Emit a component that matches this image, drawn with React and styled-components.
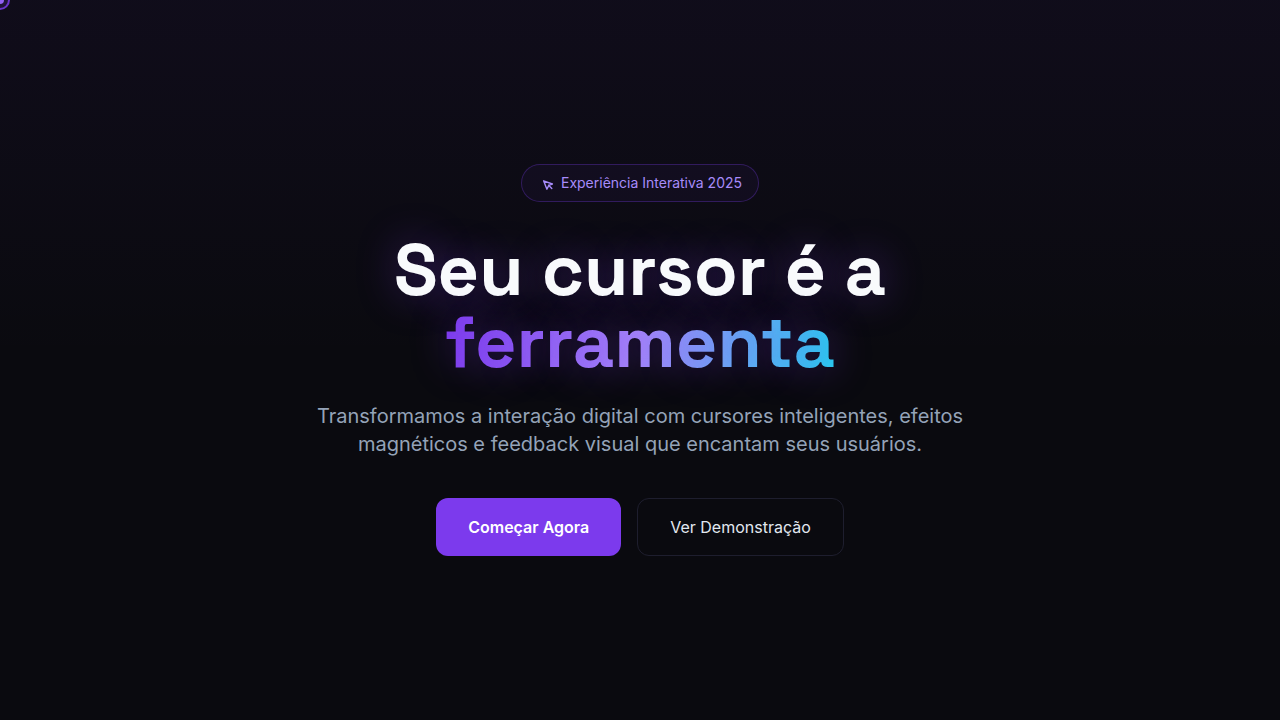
import React from "react";
import styled, { createGlobalStyle } from "styled-components";

const GlobalStyle = createGlobalStyle`
  * {
    box-sizing: border-box;
  }

  body {
    margin: 0;
    background: #0a0a0f;
    color: #f8fafc;
    font-family: Inter, "Liberation Sans", sans-serif;
    overflow-x: hidden;
  }
`;

const Hero = styled.main`
  display: flex;
  flex-direction: column;
  justify-content: center;
  align-items: center;
  min-height: 100vh;
  padding: 32px 24px;
  text-align: center;
  background: linear-gradient(180deg, rgba(124, 58, 237, 0.05) 0%, transparent 50%);
`;

const Badge = styled.div`
  display: flex;
  align-items: center;
  gap: 8px;
  margin-bottom: 32px;
  padding: 8px 16px;
  border: 1px solid rgba(124, 58, 237, 0.3);
  border-radius: 20px;
  background: rgba(124, 58, 237, 0.05);
  color: #a78bfa;
  font-size: 14px;
  line-height: 20px;

  svg {
    width: 15px;
    height: 15px;
    overflow: visible;
  }
`;

const Title = styled.h1`
  margin: 0 0 24px;
  font-family: "Space Grotesk", Inter, sans-serif;
  font-size: 72px;
  font-weight: 700;
  line-height: 72px;
  text-shadow: 0 0 40px rgba(124, 58, 237, 0.4);
`;

const Highlight = styled.span`
  background: linear-gradient(100deg, #7c3aed 0%, #a78bfa 50%, #22d3ee 100%);
  background-clip: text;
  -webkit-background-clip: text;
  color: transparent;
`;

const Lead = styled.p`
  max-width: 672px;
  margin: 0 0 40px;
  color: #94a3b8;
  font-size: 20px;
  line-height: 28px;
`;

const Actions = styled.div`
  display: flex;
  flex-wrap: wrap;
  justify-content: center;
  gap: 16px;
`;

const Button = styled.button`
  padding: 16px 32px;
  border: ${(props) => (props.$primary ? "none" : "1px solid #1e1e2e")};
  border-radius: 12px;
  background: ${(props) => (props.$primary ? "#7c3aed" : "transparent")};
  color: ${(props) => (props.$primary ? "#ffffff" : "#e2e8f0")};
  font-family: inherit;
  font-size: 16px;
  font-weight: ${(props) => (props.$primary ? 600 : 400)};
  line-height: 24px;
`;

const CursorDot = styled.div`
  position: fixed;
  top: -4px;
  left: -4px;
  width: 8px;
  height: 8px;
  border-radius: 50%;
  background: #9361f4;
  pointer-events: none;
`;

const CursorRing = styled.div`
  position: fixed;
  top: -10px;
  left: -10px;
  width: 20px;
  height: 20px;
  border: 2px solid #6a33ca;
  border-radius: 50%;
  background: rgba(124, 58, 237, 0.15);
  pointer-events: none;
`;

function PointerIcon() {
  return (
    <svg viewBox="0 0 15 15" fill="none" stroke="currentColor" aria-hidden="true">
      <path
        d="M5.6 4.8 L14.4 8 L10.8 9.4 L8.9 13.2 Z"
        strokeWidth="1.4"
        strokeLinejoin="round"
      />
      <path
        d="M10.6 9.2 L13.8 12.6"
        strokeWidth="1.4"
        strokeLinecap="round"
      />
    </svg>
  );
}

function App() {
  return (
    <>
      <GlobalStyle />
      <CursorRing />
      <CursorDot />
      <Hero>
        <Badge>
          <PointerIcon />
          <span>Experiência Interativa 2025</span>
        </Badge>
        <Title>
          Seu cursor é a
          <br />
          <Highlight>ferramenta</Highlight>
        </Title>
        <Lead>
          Transformamos a interação digital com cursores inteligentes, efeitos
          magnéticos e feedback visual que encantam seus usuários.
        </Lead>
        <Actions>
          <Button type="button" $primary>Começar Agora</Button>
          <Button type="button">Ver Demonstração</Button>
        </Actions>
      </Hero>
    </>
  );
}

export default App;
